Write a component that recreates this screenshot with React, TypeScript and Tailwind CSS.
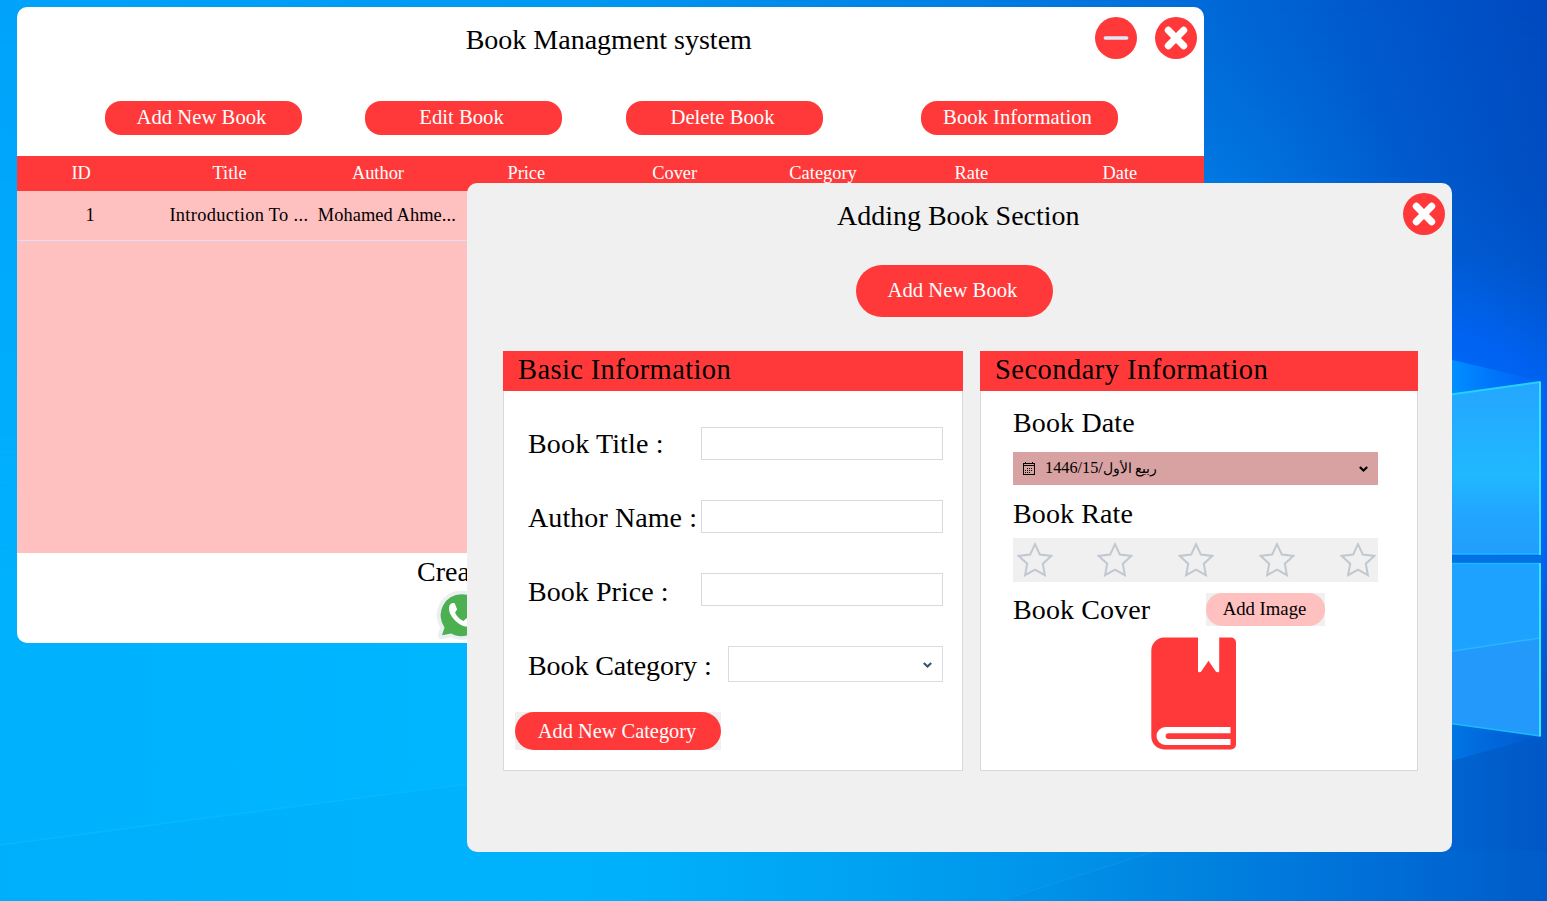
import React from "react";

function Wallpaper() {
  return (
    <svg className="absolute inset-0 h-full w-full" viewBox="0 0 1547 901" preserveAspectRatio="none" aria-hidden="true">
      <defs>
        <linearGradient id="sky" x1="0" y1="0" x2="1547" y2="0" gradientUnits="userSpaceOnUse">
          <stop offset="0" stopColor="#00a3fa" />
          <stop offset="0.38" stopColor="#0098f0" />
          <stop offset="0.6" stopColor="#0082e4" />
          <stop offset="0.78" stopColor="#006ad8" />
          <stop offset="0.9" stopColor="#0056cb" />
          <stop offset="1" stopColor="#0049bf" />
        </linearGradient>
        <linearGradient id="ground" x1="0" y1="0" x2="1547" y2="0" gradientUnits="userSpaceOnUse">
          <stop offset="0" stopColor="#00b1fe" />
          <stop offset="0.3" stopColor="#00b6ff" />
          <stop offset="0.4" stopColor="#00b1fb" />
          <stop offset="0.55" stopColor="#00a3f2" />
          <stop offset="0.68" stopColor="#0094ea" />
          <stop offset="0.78" stopColor="#0083e0" />
          <stop offset="0.9" stopColor="#006bd6" />
          <stop offset="1" stopColor="#0057c5" />
        </linearGradient>
        <linearGradient id="fall" x1="0" y1="0" x2="0" y2="1">
          <stop offset="0" stopColor="#fff" stopOpacity="0" />
          <stop offset="0.65" stopColor="#fff" />
        </linearGradient>
        <mask id="fade">
          <rect width="1547" height="901" fill="url(#fall)" />
        </mask>
        <radialGradient id="glow" cx="1440" cy="470" r="300" gradientUnits="userSpaceOnUse">
          <stop offset="0" stopColor="#0070ff" stopOpacity="1" />
          <stop offset="0.45" stopColor="#0066ff" stopOpacity="0.75" />
          <stop offset="0.75" stopColor="#0062ec" stopOpacity="0.2" />
          <stop offset="1" stopColor="#0060e0" stopOpacity="0" />
        </radialGradient>
        <radialGradient id="haze" cx="1190" cy="240" r="230" gradientUnits="userSpaceOnUse">
          <stop offset="0" stopColor="#0086f0" stopOpacity="0.6" />
          <stop offset="1" stopColor="#0070e0" stopOpacity="0" />
        </radialGradient>
        <linearGradient id="dune" x1="0" y1="0" x2="700" y2="0" gradientUnits="userSpaceOnUse">
          <stop offset="0" stopColor="#00adf9" stopOpacity="0.5" />
          <stop offset="0.6" stopColor="#00adf9" stopOpacity="0.45" />
          <stop offset="1" stopColor="#00adf9" stopOpacity="0" />
        </linearGradient>
        <linearGradient id="paneTop" x1="0" y1="380" x2="0" y2="555" gradientUnits="userSpaceOnUse">
          <stop offset="0" stopColor="#25a5ff" />
          <stop offset="0.55" stopColor="#20b8ff" />
          <stop offset="0.75" stopColor="#22a6ff" />
          <stop offset="1" stopColor="#229dfc" />
        </linearGradient>
        <linearGradient id="beam" x1="1452" y1="0" x2="1547" y2="0" gradientUnits="userSpaceOnUse">
          <stop offset="0" stopColor="#0090ff" />
          <stop offset="1" stopColor="#0068ff" stopOpacity="0.2" />
        </linearGradient>
      </defs>
      <rect width="1547" height="901" fill="url(#sky)" />
      <rect width="1547" height="901" fill="url(#ground)" mask="url(#fade)" />
      <circle cx="1190" cy="240" r="230" fill="url(#haze)" />
      <rect x="1140" y="170" width="407" height="600" fill="url(#glow)" />
      <path d="M0 845 467 784 700 750V901H0Z" fill="url(#dune)" />
      <path d="M0 845 467 784" stroke="#0bbcff" strokeWidth="1.500" opacity="0.6" />
      <path d="M1155 851 1000 901H1547V851Z" fill="#0078e0" opacity="0.12" />
      <path d="M1155 851 1000 901" stroke="#1899f0" strokeWidth="1.200" opacity="0.5" />
      <path d="M1440 357 1541 381 1440 396Z" fill="url(#beam)" />
      <path d="M1440 722 1541 736 1440 764Z" fill="url(#beam)" opacity="0.4" />
      <path d="M1440 396 1540 382V554H1440Z" fill="url(#paneTop)" />
      <path d="M1440 563H1540V736L1440 722Z" fill="#2299fb" />
      <path d="M1440 563H1540V638L1440 653Z" fill="#1ea2ff" />
      <path d="M1440 653 1540 638" stroke="#29b6ff" strokeWidth="1.500" />
      <path d="M1440 396 1540 382" stroke="#22d3fb" strokeWidth="2" />
      <path d="M1440 554H1540M1440 563.500H1540M1440 722 1540 736" stroke="#19bdfb" strokeWidth="1.600" fill="none" />
      <path d="M1540 381.500V555M1540 563V736.500" stroke="#35e4ff" strokeWidth="2" />
      <path d="M1440 559H1541" stroke="#0072e4" strokeWidth="6" />
    </svg>
  );
}

function CloseIcon() {
  return (
    <svg className="block h-[42px] w-[42px]" viewBox="0 0 42 42">
      <circle cx="21" cy="21" r="21" fill="#ff393a" />
      <path d="M13.300 13.300 28.700 28.700M28.700 13.300 13.300 28.700" stroke="#fff" strokeWidth="7" strokeLinecap="round" />
    </svg>
  );
}

function MinimizeIcon() {
  return (
    <svg className="block h-[42px] w-[42px]" viewBox="0 0 42 42">
      <circle cx="21" cy="21" r="21" fill="#ff393a" />
      <path d="M10.300 21H31.700" stroke="#dbe8fb" strokeWidth="3.400" strokeLinecap="round" />
    </svg>
  );
}

function WhatsAppIcon() {
  return (
    <svg className="block h-[50px] w-[50px]" viewBox="436 591 50 50">
      <path
        d="M461.500 594.500a20.600 20.600 0 1 1-9.800 38.700L442 635.200l2.500-8.200A20.600 20.600 0 0 1 461.500 594.500Z"
        fill="#4caf50"
        stroke="#eceff1"
        strokeWidth="8"
        strokeLinejoin="round"
      />
      <path d="M461.500 594.200a21 21 0 1 1-10.300 39.200L442 635.200l2.500-7.800A21 21 0 0 1 461.500 594.200Z" fill="#4caf50" />
      <path
        d="M449 609c0-3.500 1.500-6 4.300-5.900 1 0 1.500.4 1.900 1.400l1.800 4.600c.3.800-1.600 2.800-1.900 3.700 1.500 3.600 4.600 6.600 8.300 8.100 1.200-.3 2.700-3.200 3.900-2.800l5 2.500c1 .6.300 3-1 4.300-2.400 2.200-5 2-8 1C456 623.300 449 615 449 609Z"
        fill="#fff"
      />
    </svg>
  );
}

function BookIcon() {
  return (
    <svg className="block h-[113px] w-[85px]" viewBox="0 0 85 113">
      <path
        d="M13 0.500H47V34c0 1.500 2.400 1.600 3.200.4L57.500 23.800l7.300 10.600c.8 1.200 3.400 1.100 3.400-.4V.5H80a5 5 0 0 1 5 5V107.500a5 5 0 0 1-5 5H13A13 13 0 0 1 .3 99.500V13.500A13 13 0 0 1 13 .5Z"
        fill="#ff393a"
      />
      <path d="M79.500 90H14.500a9 9 0 0 0 0 18H79.500V102H17.500a2.800 2.800 0 0 1 0-5.800H79.500Z" fill="#fff" />
    </svg>
  );
}

function StarIcon() {
  return (
    <svg className="block h-[35px] w-[36px]" viewBox="0 0 36 35">
      <path
        d="M18 2.200 22.800 12.500 34.300 13.900 25.800 21.700 27.900 33.200 18 27.600 8.100 33.200 10.200 21.700 1.700 13.900 13.200 12.500Z"
        fill="none"
        stroke="#c1c8d0"
        strokeWidth="2"
      />
    </svg>
  );
}

function CalendarIcon() {
  return (
    <svg className="block h-[13px] w-[12px]" viewBox="0 0 12 13" shapeRendering="crispEdges">
      <path d="M0 1H12V13H0ZM1 4V12H11V4Z" fill="#000" fillRule="evenodd" />
      <path d="M1 2H11V3H1Z" fill="#d8a2a2" />
      <path d="M2 0h1v2H2ZM9 0h1v2H9Z" fill="#000" />
      <path d="M4 6h1v1H4ZM6 6h1v1H6ZM8 6h1v1H8ZM2 8h1v1H2ZM4 8h1v1H4ZM6 8h1v1H6ZM8 8h1v1H8ZM2 10h1v1H2ZM4 10h1v1H4ZM6 10h1v1H6Z" fill="#000" />
    </svg>
  );
}

function Chevron({ color }: { color: string }) {
  return (
    <svg className="block h-[6px] w-[9px]" viewBox="0 0 9 6">
      <path d="M0.800 0.900 4.500 4.500 8.200 0.900" fill="none" stroke={color} strokeWidth="2.100" />
    </svg>
  );
}

const pill =
  "flex h-[34px] w-[197px] items-center justify-center rounded-[16px] bg-[#ff393a] pr-[3px] text-[20.7px] leading-none text-white";

const columns = ["ID", "Title", "Author", "Price", "Cover", "Category", "Rate", "Date"];

function MainWindow() {
  return (
    <section className="absolute left-[17px] top-[7px] flex h-[636px] w-[1187px] flex-col overflow-hidden rounded-[10px] bg-white">
      <header className="grid h-[93.5px] shrink-0 grid-cols-[1fr_auto_1fr] items-start pr-[7.5px]">
        <span />
        <h1 className="ml-[4px] pt-[17px] text-[28px] leading-[32px]">Book Managment system</h1>
        <div className="flex justify-end gap-[18px] pt-[9.5px]">
          <button><MinimizeIcon /></button>
          <button><CloseIcon /></button>
        </div>
      </header>
      <nav className="flex h-[55.5px] shrink-0 items-start pl-[87.5px]">
        <button className={pill}>Add New Book</button>
        <button className={`${pill} ml-[63px]`}>Edit Book</button>
        <button className={`${pill} ml-[64px]`}>Delete Book</button>
        <button className={`${pill} ml-[98px]`}>Book Information</button>
      </nav>
      <div className="flex h-[397px] shrink-0 flex-col bg-[#ffc0c0]">
        <div className="grid h-[35px] grid-cols-8 items-center bg-[#ff393a] text-[18.4px] leading-none text-white">
          {columns.map((c) => (
            <span key={c} className="pr-[20px] text-center">{c}</span>
          ))}
        </div>
        <div className="grid h-[50px] grid-cols-8 items-center border-b border-[#d9dffa] text-[18.4px] leading-none">
          <span className="pr-[2px] text-center">1</span>
          <span className="whitespace-nowrap pl-[4px] tracking-[0.33px]">Introduction To ...</span>
          <span className="whitespace-nowrap pl-[4px] tracking-[0.08px]">Mohamed Ahme...</span>
        </div>
      </div>
      <footer className="flex flex-1 flex-col items-start">
        <p className="ml-[400px] mt-[3px] text-[28px] leading-[32px]">Created</p>
        <div className="ml-[419px] mt-[3px]"><WhatsAppIcon /></div>
      </footer>
    </section>
  );
}

const panel = "flex h-[420px] flex-col border border-t-0 border-[#d5dadf] bg-white";
const label = "w-[173px] shrink-0 whitespace-nowrap text-[28px] leading-[32px]";
const input = "h-[33px] w-[242px] border border-[#d5dadf] bg-white outline-none";

function BasicPanel() {
  return (
    <div className={`${panel} w-[460px]`}>
      <h3 className="-mx-px h-[40px] shrink-0 bg-[#ff393a] pl-[15px] pt-[3px] text-[28.5px] leading-[32px] tracking-[0.38px]">
        Basic Information
      </h3>
      <div className="flex flex-col pl-[24px] pt-[36px]">
        <label className="flex h-[73px] items-start">
          <span className={`${label} pt-[1px] tracking-[0.15px]`}>Book Title :</span>
          <input className={input} />
        </label>
        <label className="flex h-[73px] items-start">
          <span className={`${label} pt-[2px] tracking-[0.08px]`}>Author Name :</span>
          <input className={input} />
        </label>
        <label className="flex h-[73px] items-start">
          <span className={`${label} pt-[3px] tracking-[0.05px]`}>Book Price :</span>
          <input className={input} />
        </label>
        <div className="flex h-[66px] items-start">
          <span className={`${label} mr-[27px] pt-[4px] tracking-[-0.1px]`}>Book Category :</span>
          <button className="flex h-[36px] w-[215px] items-center justify-end border border-[#d9dce3] bg-white pr-[10px] pt-[2px]">
            <Chevron color="#3b556b" />
          </button>
        </div>
      </div>
      <div className="ml-[11px] h-[38px] w-[206px] bg-[#f0f0f0]">
        <button className="flex h-full w-full items-center justify-center rounded-[19px] bg-[#ff393a] pr-[2px] text-[20.4px] leading-none text-white">
          Add New Category
        </button>
      </div>
    </div>
  );
}

function SecondaryPanel() {
  return (
    <div className={`${panel} w-[438px]`}>
      <h3 className="-mx-px h-[40px] shrink-0 bg-[#ff393a] pl-[15px] pt-[3px] text-[28.5px] leading-[32px] tracking-[0.46px]">
        Secondary Information
      </h3>
      <div className="flex flex-col pl-[32px] pt-[16px] text-[28px] leading-[32px]">
        <p className="tracking-[0.14px]">Book Date</p>
        <button className="mt-[13px] flex h-[33px] w-[365px] items-center bg-[#d8a2a2] pl-[10px] pr-[10px]">
          <CalendarIcon />
          <span className="ml-[10px] flex-1 whitespace-nowrap text-left text-[16.3px] leading-[20px]" dir="ltr">
            1446/15/<span className="text-[14px]">ربيع الأول</span>
          </span>
          <Chevron color="#000" />
        </button>
        <p className="mt-[13px] tracking-[0.12px]">Book Rate</p>
        <div className="mt-[8px] flex h-[44px] w-[365px] items-start justify-between bg-[#f0f0f0] pl-[3.5px] pr-[2.5px] pt-[4px]">
          <StarIcon />
          <StarIcon />
          <StarIcon />
          <StarIcon />
          <StarIcon />
        </div>
        <div className="mt-[11px] flex h-[44px] items-start">
          <p className="w-[193px] pt-[1px] tracking-[0.1px]">Book Cover</p>
          <div className="h-[33px] w-[119px] bg-[#f0f0f0]">
            <button className="flex h-full w-full items-center justify-center rounded-[16px] bg-[#ffc0c0] pr-[2px] text-[18.7px] leading-none">
              Add Image
            </button>
          </div>
        </div>
        <div className="ml-[138px]"><BookIcon /></div>
      </div>
    </div>
  );
}

function AddBookWindow() {
  return (
    <section className="absolute left-[467px] top-[183px] flex h-[669px] w-[985px] flex-col overflow-hidden rounded-[10px] bg-[#f0f0f0]">
      <header className="grid h-[81.5px] shrink-0 grid-cols-[1fr_auto_1fr] items-start pr-[7.5px]">
        <span />
        <h2 className="ml-[5px] pt-[17px] text-[28px] leading-[32px]">Adding Book Section</h2>
        <div className="flex justify-end pt-[9.5px]">
          <button><CloseIcon /></button>
        </div>
      </header>
      <button className="ml-[388.5px] flex h-[52px] w-[197px] shrink-0 items-center justify-center rounded-[26px] bg-[#ff393a] pr-[3px] text-[20.7px] leading-none text-white">
        Add New Book
      </button>
      <div className="mt-[34.5px] flex gap-[17px] pl-[36px]">
        <BasicPanel />
        <SecondaryPanel />
      </div>
    </section>
  );
}

export default function App() {
  return (
    <main className="relative h-[901px] w-[1547px] overflow-hidden bg-[#00a3fa] font-['Liberation_Serif',serif] text-black">
      <Wallpaper />
      <MainWindow />
      <AddBookWindow />
    </main>
  );
}
